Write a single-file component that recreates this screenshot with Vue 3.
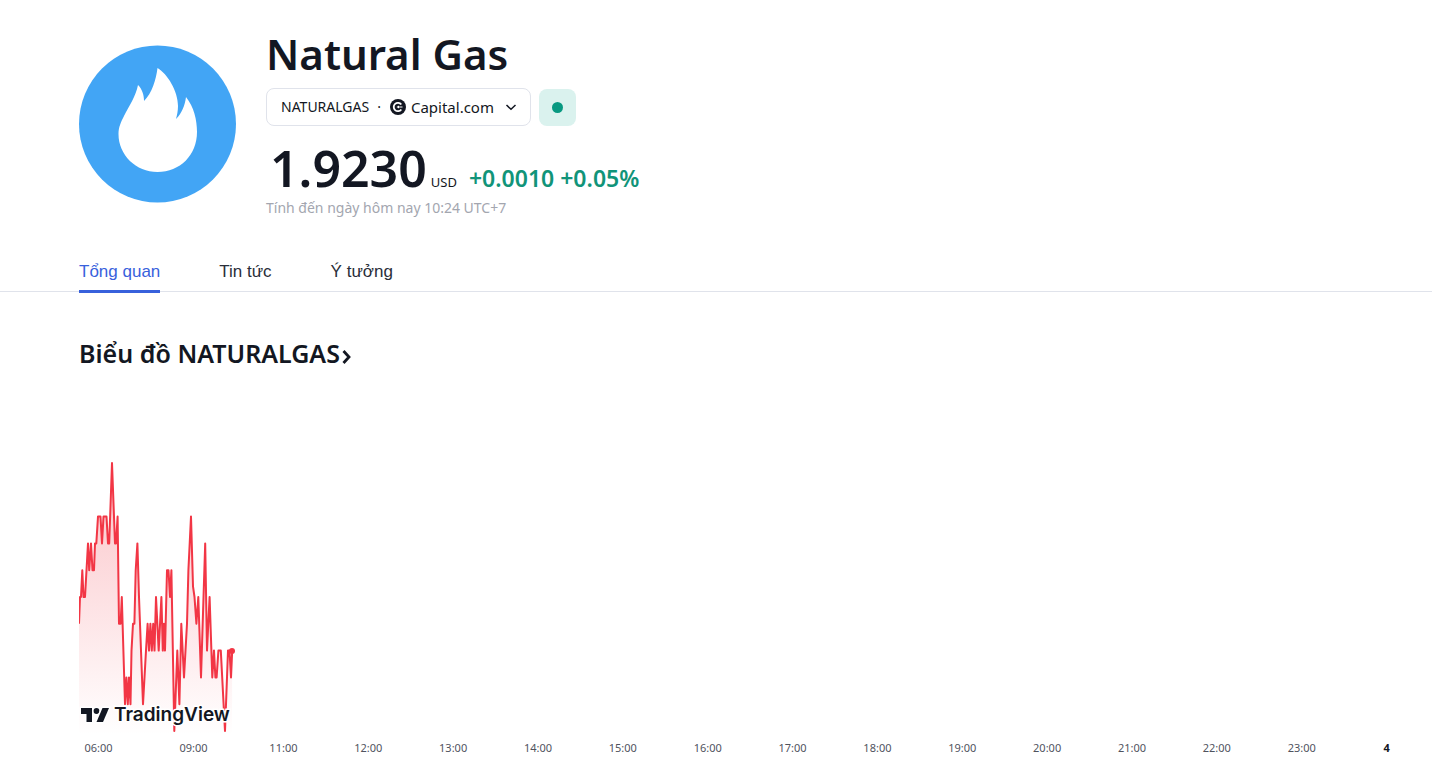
<script setup>
import { ref } from 'vue'

const tabs = ['Tổng quan', 'Tin tức', 'Ý tưởng']
const active = ref(0)

const times = [
  '06:00', '09:00', '11:00', '12:00', '13:00', '14:00', '15:00', '16:00',
  '17:00', '18:00', '19:00', '20:00', '21:00', '22:00', '23:00', '4',
]

const series = [
  [0, 6], [1, 5], [2, 5], [3.3, 4], [4.5, 5], [6, 5], [9, 3], [10.2, 4], [12, 3], [13.5, 4],
  [15, 4], [16, 3], [17.3, 3], [19, 2], [21.5, 2], [23, 3], [24.5, 2], [27.5, 2], [29, 3],
  [30.2, 3], [33, 0], [36, 3], [37, 3], [38.6, 2], [40, 6], [41.6, 6], [42.8, 5], [46, 9],
  [47.4, 8], [48.8, 9], [50, 8], [51.5, 9], [52.5, 7], [54, 6], [55.4, 6], [56.7, 4], [58.4, 3],
  [60, 5], [62, 7], [64, 9], [67, 7], [68.6, 6], [70, 7], [71.4, 6], [72.8, 7], [74.2, 6],
  [75.5, 7], [77, 5], [79.7, 7], [82.4, 5], [83.8, 7], [85, 6], [86, 7], [88, 4], [89.5, 4],
  [91, 5], [92.4, 4], [95.3, 10], [98.3, 7], [100.4, 9], [102.3, 6], [105, 8], [108, 6],
  [109.4, 4], [112, 2], [114, 4.6], [115.5, 5], [117.4, 6], [119.3, 5], [122, 8], [126.2, 3],
  [128, 7], [130.6, 5], [133.3, 8], [135, 7], [136.4, 8], [137.6, 8], [139.4, 7], [141.8, 7],
  [146, 10], [149, 7], [150.5, 7], [152, 8], [153.2, 7],
]
const tick = 26.8
const line = series.map(([x, l]) => `${x},${(l * tick + 3).toFixed(1)}`).join(' ')
const area = `0,275 ${line} 153,275`
</script>

<template>
  <main class="page">
    <header class="head">
      <svg class="logo" viewBox="0 0 158 158" aria-hidden="true">
        <circle cx="78.500" cy="79" r="78.500" fill="#42a5f5" />
        <path
          fill="#fff"
          d="M78.500 23C88.500 29 99 46 99 61C99 66 98 70 97 74C103 68 106 60 107 52C115 62 118 75 118 87C118 110 101 127 78.500 127C57 127 39.500 110 39.500 89C39.500 82 42 77 45 71C50 61 57 51 59 40C63 44 65 50 65 56C73 48 77 35 78.500 23Z"
        />
      </svg>
      <div class="info">
        <h1>Natural Gas</h1>
        <div class="row">
          <button class="symbol" type="button">
            <span>NATURALGAS</span>
            <span class="sep">·</span>
            <svg class="cap" viewBox="0 0 16 16" aria-hidden="true">
              <circle cx="8" cy="8" r="8" fill="#131722" />
              <path d="M11.300 5.500A4.200 4.200 0 1 0 11.300 10.500" fill="none" stroke="#fff" stroke-width="1.800" />
              <path d="M6.500 8 9 6.500v1h3.500v1H9v1Z" fill="#fff" />
            </svg>
            <span class="venue">Capital.com</span>
            <svg class="chev" viewBox="0 0 12 8" aria-hidden="true">
              <path d="M1.500 2 6 6.300l4.500-4.300" fill="none" stroke="#131722" stroke-width="1.500" />
            </svg>
          </button>
          <button class="status" type="button" aria-label="Thị trường mở cửa"><i></i></button>
        </div>
        <div class="quote">
          <span class="price">1.9230</span>
          <span class="cur">USD</span>
          <span class="change">+0.0010 +0.05%</span>
        </div>
        <p class="asof">Tính đến ngày hôm nay 10:24 UTC+7</p>
      </div>
    </header>

    <nav class="tabs">
      <a
        v-for="(t, i) in tabs"
        :key="t"
        href="#"
        :class="{ on: active === i }"
        @click.prevent="active = i"
      >{{ t }}</a>
    </nav>

    <h2>
      <a href="#">Biểu đồ NATURALGAS<svg viewBox="0 0 10 16" aria-hidden="true">
        <path d="M1.500 2 7 8l-5.500 6" fill="none" stroke="#131722" stroke-width="2.800" />
      </svg></a>
    </h2>

    <section class="chart">
      <svg class="plot" viewBox="0 0 160 275" aria-hidden="true">
        <defs>
          <linearGradient id="fade" x1="0" y1="0" x2="0" y2="1">
            <stop offset="0" stop-color="#f23645" stop-opacity="0.300" />
            <stop offset="1" stop-color="#f23645" stop-opacity="0" />
          </linearGradient>
        </defs>
        <polygon :points="area" fill="url(#fade)" />
        <polyline :points="line" fill="none" stroke="#f23645" stroke-width="2" stroke-linejoin="round" />
        <circle cx="153" cy="191" r="3" fill="#f23645" />
      </svg>
      <a class="brand" href="#">
        <svg viewBox="0 0 28 14" aria-hidden="true">
          <g fill="#131722" stroke="#fff" stroke-width="3" paint-order="stroke">
            <path d="M0 0H11V14H5.500V6H0Z" />
            <circle cx="15.500" cy="3" r="2.900" />
            <path d="M21.500 0H28L22 14H15.500Z" />
          </g>
        </svg>
        <span>TradingView</span>
      </a>
    </section>
    <div class="axis">
      <span v-for="t in times" :key="t" :class="{ day: t === '4' }">{{ t }}</span>
    </div>
  </main>
</template>

<style>
body {
  margin: 0;
  background: #fff;
}
</style>

<style scoped>
.page {
  color: #131722;
  font-family: "Trebuchet MS", "Noto Sans", sans-serif;
  overflow: hidden;
}
.head {
  display: flex;
  gap: 29px;
  padding: 28px 79px 0;
}
.logo {
  width: 158px;
  height: 158px;
  margin-top: 17px;
  flex: none;
}
h1 {
  margin: 0;
  font-size: 42px;
  line-height: 52px;
  font-weight: 600;
}
.row {
  display: flex;
  gap: 8px;
  margin-top: 8px;
}
button {
  font-family: inherit;
  color: inherit;
  cursor: pointer;
}
.symbol {
  display: flex;
  align-items: center;
  width: 265px;
  height: 38px;
  padding: 0 13px 0 14px;
  border: 1px solid #e0e3eb;
  border-radius: 8px;
  background: #fff;
  font-size: 14px;
  line-height: 20px;
  white-space: nowrap;
}
.sep {
  margin: 0 9px 0 8px;
}
.cap {
  width: 16px;
  height: 16px;
  margin-right: 5px;
}
.venue {
  font-size: 15px;
}
.chev {
  width: 12px;
  height: 8px;
  margin-left: auto;
}
.status {
  display: grid;
  place-items: center;
  width: 37px;
  height: 37px;
  margin-top: 1px;
  padding: 0;
  border: 0;
  border-radius: 8px;
  background: #daf2ee;
}
.status i {
  width: 11px;
  height: 11px;
  border-radius: 50%;
  background: #089981;
}
.quote {
  display: flex;
  align-items: baseline;
  margin-top: 13px;
  padding-left: 4px;
  line-height: 20px;
  white-space: nowrap;
}
.price {
  font-size: 50px;
  line-height: 58px;
  font-weight: 600;
}
.cur {
  margin-left: 4px;
  font-size: 13px;
}
.change {
  margin-left: 12px;
  color: #119479;
  font-size: 23px;
  font-weight: 600;
}
.asof {
  margin: 1px 0 0;
  color: #a3a6af;
  font-size: 14px;
  line-height: 20px;
}
.tabs {
  display: flex;
  gap: 59px;
  margin-top: 34px;
  padding: 0 79px;
  border-bottom: 1px solid #e0e3eb;
  font-family: "Liberation Sans", Arial, sans-serif;
  font-size: 17px;
  line-height: 20px;
}
.tabs a {
  padding: 10px 0 8px;
  margin-bottom: -2px;
  border-bottom: 3px solid transparent;
  color: #2a2e39;
  text-decoration: none;
}
.tabs a.on {
  border-color: #3861dc;
  color: #3861dc;
}
h2 {
  margin: 43px 79px 0;
  font-size: 25px;
  line-height: 36px;
  font-weight: 600;
}
h2 a {
  color: inherit;
  text-decoration: none;
}
h2 svg {
  width: 10px;
  height: 16px;
  margin-left: 2px;
  vertical-align: -2px;
}
.chart {
  position: relative;
  margin: 89px 0 0 79px;
}
.plot {
  display: block;
  width: 160px;
  height: 275px;
}
.brand {
  position: absolute;
  left: 2px;
  bottom: 8px;
  display: flex;
  align-items: center;
  gap: 5px;
  color: #131722;
  font-family: Inter, sans-serif;
  font-size: 19px;
  line-height: 24px;
  font-weight: 600;
  text-decoration: none;
}
.brand svg {
  width: 28px;
  height: 14px;
  overflow: visible;
}
.brand span {
  -webkit-text-stroke: 3px #fff;
  paint-order: stroke fill;
}
.axis {
  display: grid;
  grid-template-columns: 95px 95px repeat(14, 1fr);
  padding: 5px 3px 0 51px;
  color: #50535e;
  font-size: 11px;
  line-height: 16px;
  text-align: center;
}
.day {
  color: #131722;
  font-weight: 700;
}
</style>
